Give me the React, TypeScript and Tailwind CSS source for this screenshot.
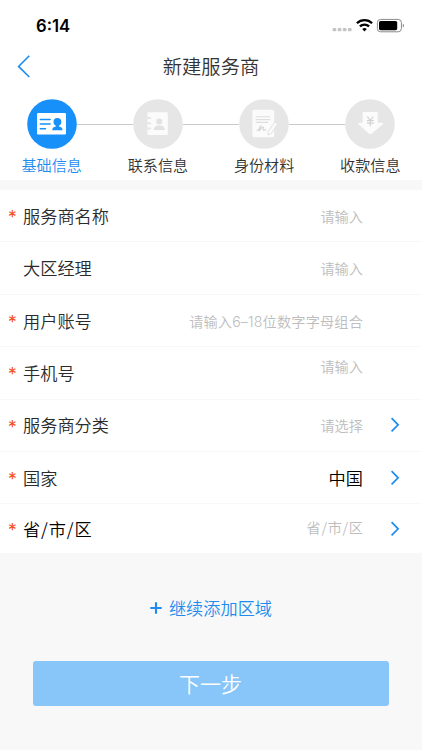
import type { ReactNode } from "react";
import clsx from "clsx";

interface Step {
  label: string;
  icon: ReactNode;
}

interface Field {
  label: string;
  required?: boolean;
  placeholder?: string;
  value?: string;
  arrow?: boolean;
  rowClass?: string;
  labelClass?: string;
  valueClass?: string;
}

const steps: Step[] = [
  {
    label: "基础信息",
    icon: (
      <>
        <rect x="10" y="14" width="29" height="21.5" rx="1.2" fill="#fff" />
        <path
          d="M13.3 20.5h9.8M13.3 25h9.8M13.3 29.7h5.2"
          stroke="#1890fa"
          strokeWidth="1.5"
          strokeLinecap="round"
        />
        <circle cx="30.4" cy="22.8" r="3.9" fill="#1890fa" />
        <path
          d="M25.2 31.2c0-2.6 1.6-3.4 3.6-3.8v-2h3.2v2c2 .4 3.6 1.2 3.6 3.8z"
          fill="#1890fa"
        />
      </>
    ),
  },
  {
    label: "联系信息",
    icon: (
      <>
        <rect x="14.4" y="13.3" width="20.4" height="22.8" rx="1.2" fill="#fbfbfb" />
        <path
          d="M13.6 19h3.6M13.6 24.3h3.6M13.6 29.6h3.6"
          stroke="#e6e6e6"
          strokeWidth="2"
          strokeLinecap="round"
        />
        <circle cx="26.2" cy="22.4" r="3" fill="#e2e2e2" />
        <path
          d="M20.6 31c0-2.7 1.6-4 4-4.5h3.2c2.4.5 4 1.8 4 4.5z"
          fill="#e2e2e2"
        />
      </>
    ),
  },
  {
    label: "身份材料",
    icon: (
      <>
        <rect x="13.4" y="10.7" width="21.8" height="27.6" rx="2" fill="#fbfbfb" />
        <path
          d="M16.7 17.8h14.6M16.7 20.6h14.6M16.7 23.4h12.4"
          stroke="#dedede"
          strokeWidth="1.1"
        />
        <path
          d="M17.6 31.6c2.4-1.1 4.4-3.2 4.5-4.7-1.2 0-2 3-1.8 4.9 1.5-1.9 3.4-4.2 4.3-3.6.3.9-.9 3 0 3.3.8.2 1.6-.8 2.6-1.4"
          stroke="#d8d8d8"
          strokeWidth="1.1"
          fill="none"
        />
        <path
          d="M35.8 22.8l2.9 2-6.4 9.6-3.3 1.7.3-3.7z"
          fill="#fbfbfb"
          stroke="#e2e2e2"
          strokeWidth="1"
        />
      </>
    ),
  },
  {
    label: "收款信息",
    icon: (
      <>
        <path
          d="M18.6 13h13.2a1 1 0 0 1 1 1v9.7h4.4c1 0 1.3.8.6 1.5L26.3 34.9c-.7.6-1.3.6-2 0L13.7 25.2c-.8-.7-.5-1.5.5-1.5h3.4V14a1 1 0 0 1 1-1z"
          fill="#fbfbfb"
        />
        <path
          d="M22.3 17.6l3 3.7 3-3.7M21.9 21.6h6.8M21.9 24.2h6.8M25.3 21.3v5.9"
          stroke="#d2d2d2"
          strokeWidth="1.2"
          fill="none"
        />
      </>
    ),
  },
];

const fields: Field[] = [
  { label: "服务商名称", required: true, placeholder: "请输入", valueClass: "pt-[2px]" },
  { label: "大区经理", placeholder: "请输入", valueClass: "pt-[2px]" },
  {
    label: "用户账号",
    required: true,
    placeholder: "请输入6–18位数字字母组合",
    valueClass: "pt-[2px] tracking-[0.15px] font-[Inter,'Noto_Sans_CJK_SC',sans-serif]",
  },
  { label: "手机号", required: true, placeholder: "请输入", valueClass: "pb-[13px]" },
  { label: "服务商分类", required: true, placeholder: "请选择", arrow: true },
  { label: "国家", required: true, value: "中国", arrow: true },
  {
    label: "省/市/区",
    required: true,
    placeholder: "省/市/区",
    arrow: true,
    rowClass: "h-[50px]",
    labelClass: "text-black tracking-[0.9px]",
    valueClass: "pb-[2px] tracking-[0.7px] -mr-[0.7px]",
  },
];

function StatusBar() {
  return (
    <div className="flex h-[42px] items-end justify-between pl-9 pr-[17px]">
      <span className="font-[Inter] text-[16.7px] font-semibold leading-[32px] text-black">
        6:14
      </span>
      <svg width="74" height="20" viewBox="0 0 74 20" className="mb-[6px]">
        <g fill="#c4c4c4">
          <rect x="1.6" y="12" width="3.7" height="3.2" rx="0.9" />
          <rect x="6.7" y="12" width="3.7" height="3.2" rx="0.9" />
          <rect x="11.8" y="12" width="3.7" height="3.2" rx="0.9" />
          <rect x="16.9" y="12" width="3.7" height="3.2" rx="0.9" />
        </g>
        <g fill="none" stroke="#000" strokeWidth="2.3">
          <path d="M25.9 7.2a10.8 10.8 0 0 1 15.2 0" />
          <path d="M28.9 10.4a6.6 6.6 0 0 1 9.2 0" />
        </g>
        <path d="M33.5 15.5l-2.3-2.4a3.3 3.3 0 0 1 4.6 0z" fill="#000" />
        <rect x="46.4" y="3.4" width="24" height="12.4" rx="3.2" fill="none" stroke="#8a8a8a" />
        <rect x="48" y="5" width="18.2" height="9.2" rx="1.6" fill="#000" />
        <path d="M71.8 7.8c1.5.5 1.5 3.1 0 3.6z" fill="#777" />
      </svg>
    </div>
  );
}

function Steps() {
  return (
    <div className="pt-[9px]">
      <div className="flex items-center pl-[27px] pr-[27px]">
        {steps.map((step, index) => (
          <div key={step.label} className={clsx("flex items-center", index > 0 && "flex-1")}>
            {index > 0 && <div className="h-px flex-1 bg-[#c9c9c9]" />}
            <svg width="50" height="50" viewBox="0 0 50 50" className="shrink-0">
              <circle cx="25" cy="25" r="24.8" fill={index === 0 ? "#1890fa" : "#e6e6e6"} />
              {step.icon}
            </svg>
          </div>
        ))}
      </div>
      <div className="flex justify-between pl-[21.5px] pr-[21.5px] pt-[3px]">
        {steps.map((step, index) => (
          <span
            key={step.label}
            className={clsx(
              "text-[15.1px] leading-6",
              index === 0 ? "text-[#1e8cee]" : "text-[#333]"
            )}
          >
            {step.label}
          </span>
        ))}
      </div>
    </div>
  );
}

function FieldRow({ field }: { field: Field }) {
  return (
    <div
      className={clsx(
        "flex items-center border-b border-[#f8f8f8] bg-white pr-[22px]",
        field.rowClass ?? "h-[52.4px]"
      )}
    >
      <span className="w-[23px] pl-2 pt-[3px] font-[Inter] text-[17.5px] font-normal leading-5 text-[#f4511e]">
        {field.required && "*"}
      </span>
      <span className={clsx("text-[17.2px]", field.labelClass ?? "text-[#2b2b2b]")}>
        {field.label}
      </span>
      <span
        className={clsx(
          "flex-1 text-right",
          field.value ? "text-[17.2px] text-black" : "text-[14.2px] text-[#bdbdbd]",
          field.valueClass
        )}
      >
        {field.value ?? field.placeholder}
      </span>
      <span className="flex w-[37px] justify-end">
        {field.arrow && (
          <svg width="10" height="16" viewBox="0 0 10 16" fill="none">
            <path d="M1.6 1.2l6.5 6.6-6.5 6.6" stroke="#1e8cee" strokeWidth="1.7" />
          </svg>
        )}
      </span>
    </div>
  );
}

export default function App() {
  return (
    <div className="flex h-[750px] w-[422px] flex-col overflow-hidden bg-[#f8f8f8] font-['Noto_Sans_CJK_SC',sans-serif] font-[350]">
      <div className="h-[180px] bg-white">
        <StatusBar />

        {/* Nav bar */}
        <div className="flex h-12 items-center pl-[17px] pr-[31px]">
          <svg width="14" height="24" viewBox="0 0 14 24" fill="none">
            <path d="M12.3 1.8L1.6 12.4l10.7 10.6" stroke="#1e8cee" strokeWidth="1.6" />
          </svg>
          <h1 className="flex-1 text-center text-[19.3px] text-[#333]">新建服务商</h1>
        </div>

        <Steps />
      </div>

      {/* Form */}
      <div className="mt-[10px]">
        {fields.map((field) => (
          <FieldRow key={field.label} field={field} />
        ))}
      </div>

      <button className="mt-10 flex h-7 items-center justify-center gap-[7px] text-[17.2px] text-[#1e8cee]">
        <svg width="12" height="12" viewBox="0 0 12 12">
          <path d="M6 .3v11.4M.3 6h11.4" stroke="#1e8cee" strokeWidth="2.1" />
        </svg>
        继续添加区域
      </button>

      <button className="mx-[33px] mt-[38.5px] h-[45.5px] rounded-[3px] bg-[#88c5f9] pr-[1px] text-[21px] text-white">
        下一步
      </button>
    </div>
  );
}
